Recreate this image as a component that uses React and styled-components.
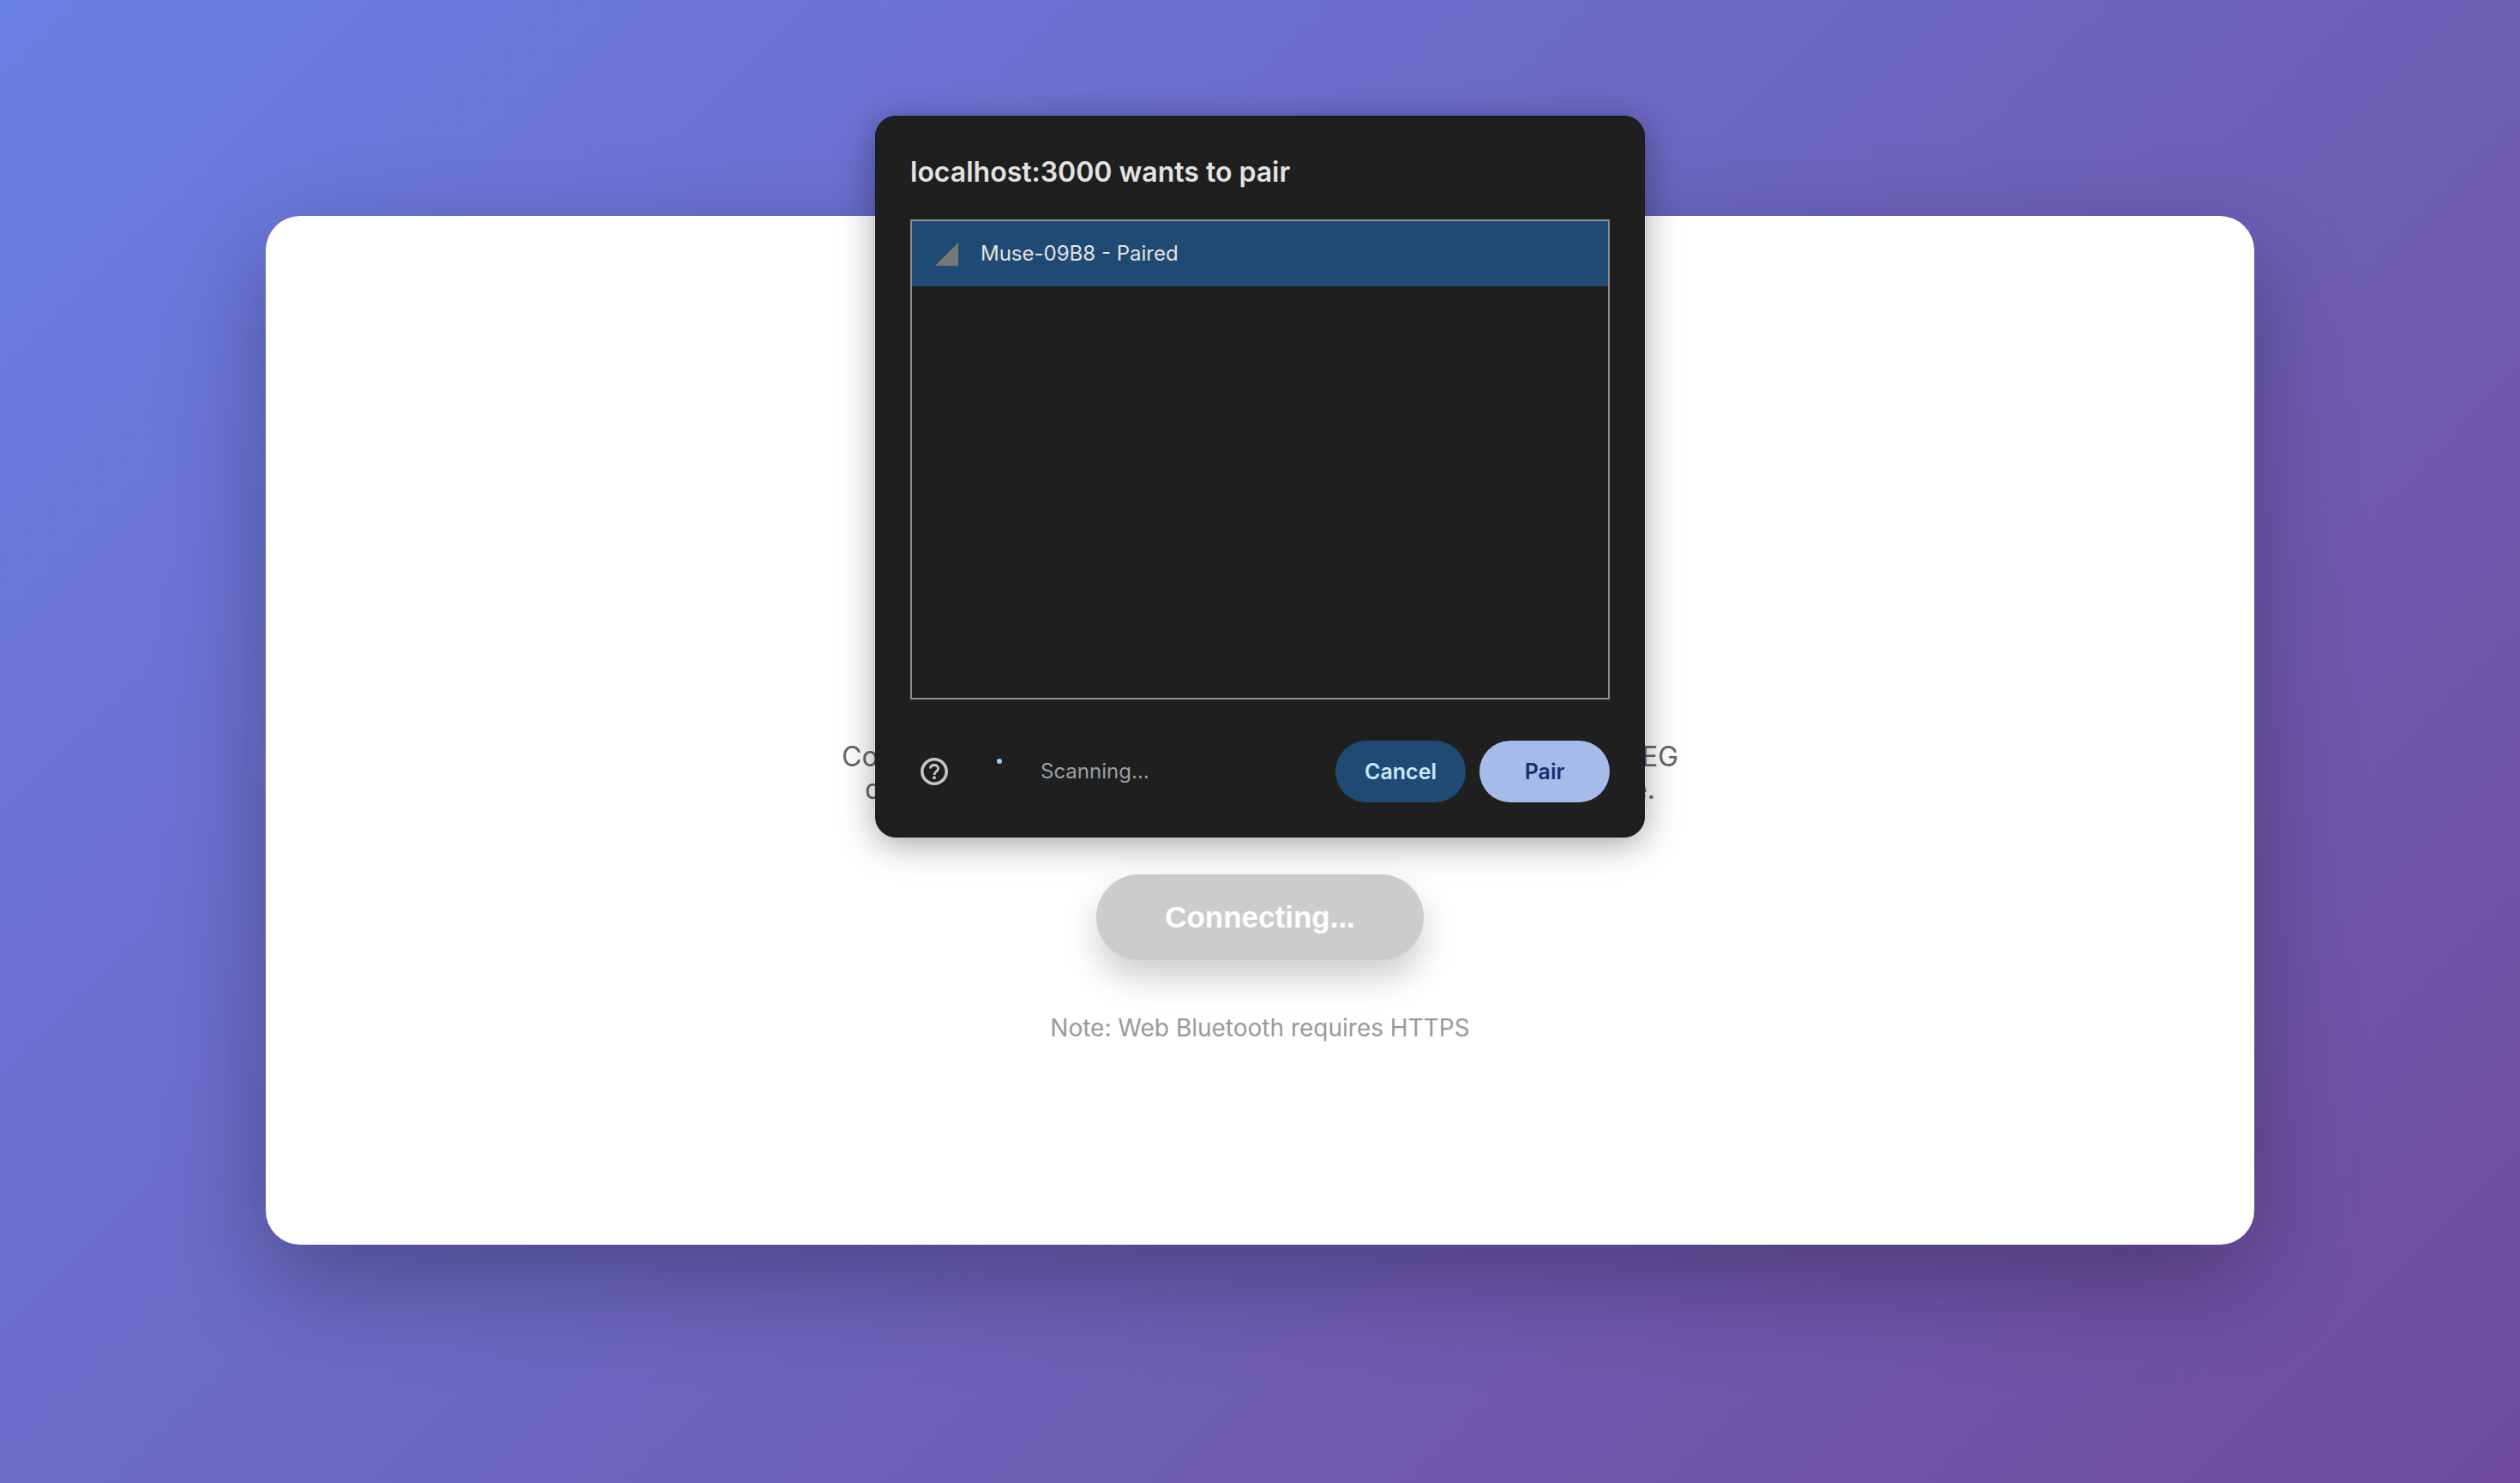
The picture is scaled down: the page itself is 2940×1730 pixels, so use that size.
import React from "react";
import styled, { createGlobalStyle } from "styled-components";

const GlobalStyle = createGlobalStyle`
  * { box-sizing: border-box; }
  body {
    margin: 0;
    font-family: Inter, "Liberation Sans", sans-serif;
  }
  button { font: inherit; border: 0; }
`;

const Page = styled.main`
  display: flex;
  align-items: center;
  min-height: 100vh;
  padding: 0 310px 26px;
  background: linear-gradient(135deg, #6a7fe4 0%, #704b9b 100%);
`;

const Card = styled.section`
  display: flex;
  flex-direction: column;
  align-items: center;
  justify-content: flex-end;
  flex: 1;
  min-height: 1200px;
  padding: 40px 40px 234px;
  border-radius: 40px;
  background: #fff;
  box-shadow: 0 40px 120px rgba(0, 0, 0, 0.3);
`;

const Intro = styled.p`
  display: flex;
  flex-direction: column;
  align-items: center;
  margin: 0 0 80px;
  color: #666;
  font-size: 32px;
  line-height: 38px;
`;

const IntroLine = styled.span`
  display: flex;
  justify-content: space-between;
  width: ${(p) => p.$width}px;
`;

const ConnectButton = styled.button`
  height: 100px;
  padding: 0 80px;
  border-radius: 50px;
  background: #ccc;
  color: #fff;
  && {
    font: 700 35px/40px "Liberation Sans", sans-serif;
  }
  box-shadow: 0 20px 40px rgba(0, 0, 0, 0.2);
`;

const Note = styled.p`
  margin: 60px 0 0;
  color: #999;
  font-size: 28px;
  line-height: 38px;
`;

const Dialog = styled.div`
  position: absolute;
  top: 135px;
  left: 50%;
  width: 898px;
  transform: translateX(-50%);
  padding: 40px;
  border: 1px solid #151520;
  border-radius: 24px;
  background: #1f1f1f;
  box-shadow: 0 8px 40px rgba(0, 0, 0, 0.36);
`;

const Title = styled.h1`
  margin: 0 0 30px;
  color: #e3e3e3;
  font-size: 32px;
  font-weight: 600;
  line-height: 50px;
`;

const DeviceList = styled.div`
  height: 560px;
  border: 2px solid #8f8f8f;
`;

const Device = styled.button`
  display: flex;
  align-items: center;
  gap: 26px;
  width: 100%;
  height: 76px;
  padding: 0 27px;
  background: #1f4a73;
  color: #e3e3e3;
  font-size: 24px;
  line-height: 32px;
`;

const Footer = styled.footer`
  display: flex;
  align-items: center;
  margin-top: 48px;
`;

const HelpButton = styled.button`
  display: flex;
  padding: 8px;
  background: none;
  color: #c7c7c7;
`;

const Spinner = styled.svg`
  margin-left: 28px;
`;

const Status = styled.span`
  margin-left: 36px;
  color: #9aa0a6;
  font-size: 24px;
  line-height: 32px;
`;

const Actions = styled.div`
  display: flex;
  gap: 16px;
  margin-left: auto;
`;

const Action = styled.button`
  width: 152px;
  height: 72px;
  border-radius: 36px;
  background: ${(p) => (p.$primary ? "#a7bbea" : "#1f4a73")};
  color: ${(p) => (p.$primary ? "#162e6e" : "#c8e6fc")};
  font-size: 25px;
  font-weight: 600;
`;

const SignalIcon = () => (
  <svg width="27" height="27" viewBox="0 0 27 27" aria-hidden="true">
    <path d="M27 0V27H0Z" fill="#777" />
  </svg>
);

const HelpIcon = () => (
  <svg width="40" height="40" viewBox="0 0 40 40" fill="none" stroke="currentColor" aria-hidden="true">
    <circle cx="20" cy="20" r="14.2" strokeWidth="3.6" />
    <path d="M15.400 16.500C15.600 14 17.500 12.500 20 12.500S24.600 14.200 24.600 16.500C24.600 19.600 20 20 20 24" strokeWidth="2.800" />
    <circle cx="20" cy="27.200" r="1.900" fill="currentColor" stroke="none" />
  </svg>
);

export default function App() {
  return (
    <>
      <GlobalStyle />
      <Page>
        <Card>
          <Intro>
            <IntroLine $width={976}>
              <span>Co</span>
              <span>EG</span>
            </IntroLine>
            <IntroLine $width={922}>
              <span>d</span>
              <span>e.</span>
            </IntroLine>
          </Intro>
          <ConnectButton type="button">Connecting...</ConnectButton>
          <Note>Note: Web Bluetooth requires HTTPS</Note>
        </Card>
      </Page>
      <Dialog role="dialog" aria-labelledby="pair-title">
        <Title id="pair-title">localhost:3000 wants to pair</Title>
        <DeviceList>
          <Device type="button">
            <SignalIcon />
            Muse-09B8 - Paired
          </Device>
        </DeviceList>
        <Footer>
          <HelpButton type="button" aria-label="Help">
            <HelpIcon />
          </HelpButton>
          <Spinner width="32" height="32" viewBox="0 0 32 32" aria-hidden="true">
            <circle cx="20" cy="4" r="3" fill="#a8c7fa" />
          </Spinner>
          <Status>Scanning…</Status>
          <Actions>
            <Action type="button">Cancel</Action>
            <Action type="button" $primary>Pair</Action>
          </Actions>
        </Footer>
      </Dialog>
    </>
  );
}
